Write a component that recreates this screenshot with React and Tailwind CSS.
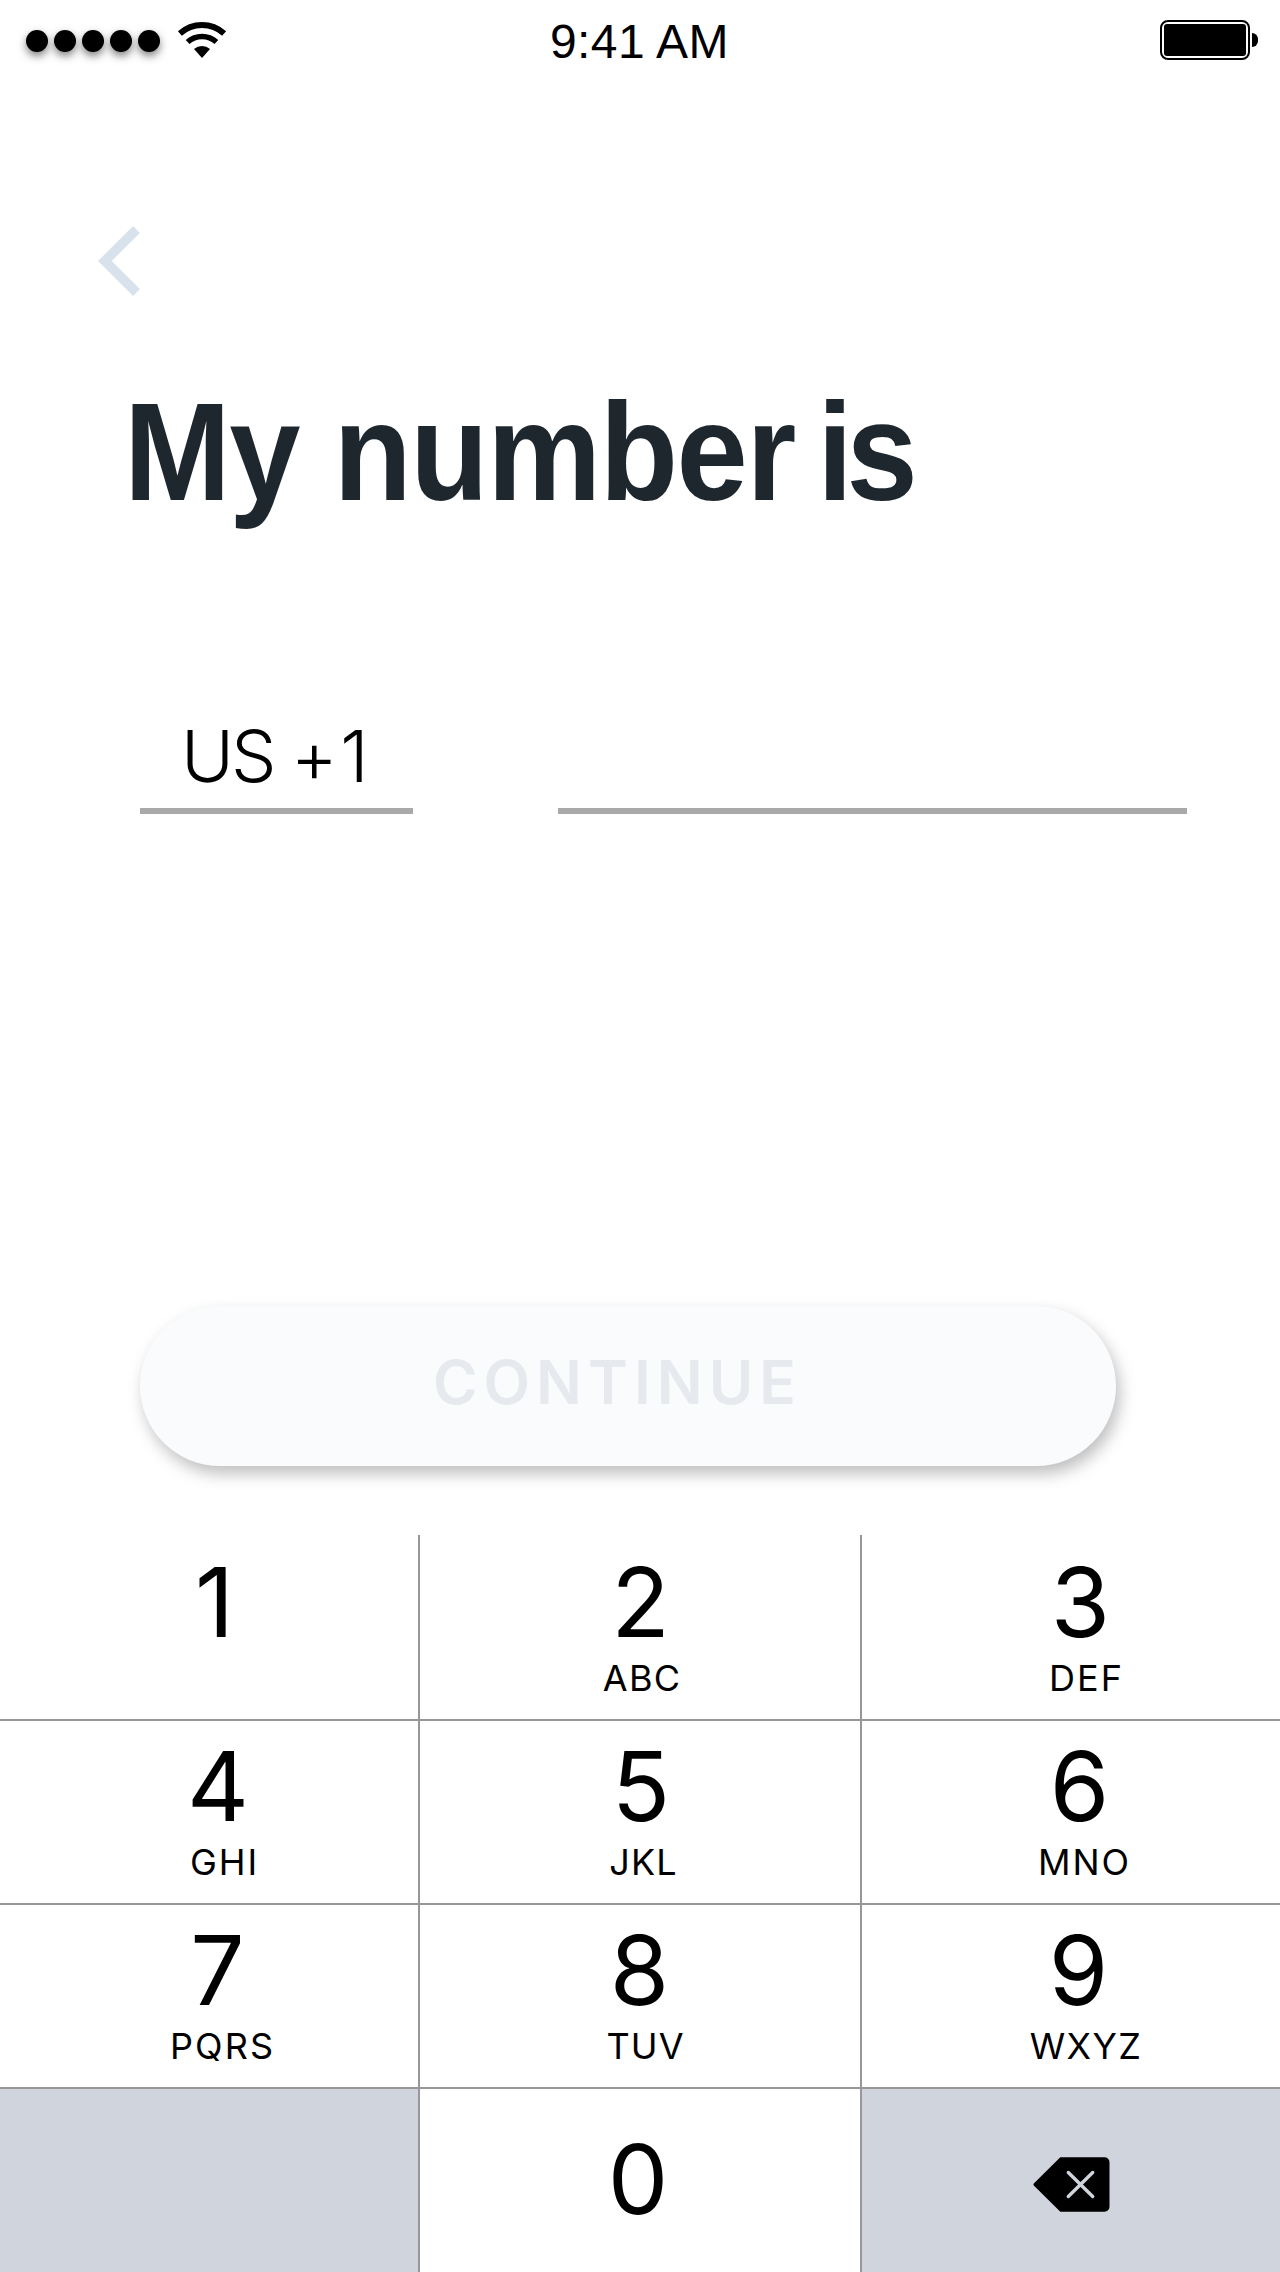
import React from "react";

const KEYS = [
  { digit: "1", digitPos: "translate-x-[5.5px]" },
  { digit: "2", digitPos: "translate-x-[0.5px]", letters: "ABC", letterPos: "translate-x-[2px] tracking-[1.2px]" },
  { digit: "3", digitPos: "translate-x-[9.5px]", letters: "DEF", letterPos: "translate-x-[15.5px] tracking-[2px]" },
  { digit: "4", digitPos: "translate-x-[9px]", letters: "GHI", letterPos: "translate-x-[15.5px] tracking-[1.9px]" },
  { digit: "5", digitPos: "translate-x-[1px]", letters: "JKL", letterPos: "translate-x-[3.5px] tracking-[1.15px]" },
  { digit: "6", digitPos: "translate-x-[8.5px]", letters: "MNO", letterPos: "translate-x-[13.5px] tracking-[2px]" },
  { digit: "7", digitPos: "translate-x-[8.5px]", letters: "PQRS", letterPos: "translate-x-[13.5px] tracking-[2.1px]" },
  { digit: "8", digitPos: "translate-x-[-0.5px]", letters: "TUV", letterPos: "translate-x-[5.5px] tracking-[1.1px]" },
  { digit: "9", digitPos: "translate-x-[7.5px]", letters: "WXYZ", letterPos: "translate-x-[15px] tracking-[1.4px]" },
];

function StatusBar() {
  return (
    <header className="flex h-20 items-start pl-[26px] pr-[22px]">
      <div className="mt-[30px] flex gap-1.5">
        {[0, 1, 2, 3, 4].map((i) => (
          <span key={i} className="size-[22px] rounded-full bg-black shadow-[0_4px_8px_rgba(0,0,0,0.5)]" />
        ))}
      </div>
      <svg className="ml-4 mt-5 h-10 w-[52px]" viewBox="0 0 52 40" fill="none" stroke="#000">
        <path d="M3.9 13.5A33 33 0 0 1 48.1 13.5" strokeWidth="6" />
        <path d="M11.6 22A21.5 21.5 0 0 1 40.4 22" strokeWidth="5.6" />
        <path d="M26 38L18 29.1A12 12 0 0 1 34 29.1Z" fill="#000" stroke="none" />
      </svg>
      <span className="ml-[322px] mt-[18px] whitespace-nowrap text-5xl leading-none tracking-[0.4px] font-['Liberation_Sans',sans-serif]">
        9:41 AM
      </span>
      <div className="ml-auto mt-5 flex items-center gap-0.5">
        <div className="h-10 w-[90px] rounded-lg border-2 border-black p-0.5">
          <div className="h-full w-full rounded-[3px] bg-black" />
        </div>
        <div className="h-3.5 w-1.5 rounded-r-full bg-black" />
      </div>
    </header>
  );
}

function Key({ digit, digitPos, letters, letterPos, className }) {
  return (
    <button className={"flex flex-col items-center bg-white " + className}>
      <span className={"text-8xl leading-none " + digitPos}>{digit}</span>
      {letters && <span className={"mt-2.5 text-4xl leading-none " + letterPos}>{letters}</span>}
    </button>
  );
}

function Keypad() {
  return (
    <div className="grid h-[737px] grid-cols-[418px_440px_418px] grid-rows-[184px_182px_182px_183px] gap-0.5 bg-[linear-gradient(#979797,#979797)]">
      {KEYS.map((k, i) => (
        <Key key={k.digit} {...k} className={i < 3 ? "pt-[19px]" : "pt-[17px]"} />
      ))}
      <div className="bg-[#d0d4dd]" />
      <Key digit="0" digitPos="translate-x-[-2px]" className="pt-[42px]" />
      <button className="flex items-start bg-[#d0d4dd] pl-[171px] pt-[68px]">
        <svg className="block h-[55px] w-[77px]" viewBox="0 0 77 55" fill="none">
          <path d="M27.3 0.3H71.5A5 5 0 0 1 76.5 5.3V49.7A5 5 0 0 1 71.5 54.7H27.3L0.8 28.6Q0 27.5 0.8 26.4Z" fill="#000" />
          <path d="M35.3 15.5L59.7 39.5M59.7 15.5L35.3 39.5" stroke="#d0d4dd" strokeWidth="3.4" strokeLinecap="round" />
        </svg>
      </button>
    </div>
  );
}

export default function App() {
  return (
    <div className="flex h-[2272px] w-[1280px] flex-col overflow-hidden bg-white text-black font-['Inter',sans-serif]">
      <StatusBar />

      <button className="ml-[97px] mt-[145px] w-[44px]">
        <svg className="block h-[72px] w-[44px]" viewBox="0 0 44 72" fill="none" stroke="#d8e2ec" strokeWidth="9.6">
          <path d="M39.5 4.5L7.8 36L39.5 67.5" />
        </svg>
      </button>

      <h1 className="ml-[124px] mt-[85px] origin-left scale-x-[0.915] whitespace-nowrap text-[140px] font-bold leading-none tracking-[-1.5px] text-[#1f272e] font-['Liberation_Sans',sans-serif]">
        My <span className="[word-spacing:-13px]">number </span>
        <span className="tracking-[-7px]">is</span>
      </h1>

      <div className="ml-[140px] mt-[198px] flex h-[94px]">
        <div className="w-[273px] border-b-[6px] border-[#a9a9a9] pl-[41px]">
          <span className="block whitespace-nowrap text-7xl font-light leading-none tracking-[-3px]">
            US <span className="tracking-[2.5px]">+1</span>
          </span>
        </div>
        <div className="ml-[145px] w-[629px] border-b-[6px] border-[#a9a9a9]" />
      </div>

      <button className="ml-[140px] mt-[492px] flex h-40 w-[976px] items-start rounded-full bg-[#fafbfd] pl-[293px] pt-[46px] shadow-[4px_8px_16px_rgba(0,0,0,0.25)]">
        <span className="text-[60.5px] font-semibold leading-none tracking-[6px] text-[#e6e9ee]">CONTINUE</span>
      </button>

      <div className="mt-[69px]">
        <Keypad />
      </div>
    </div>
  );
}
